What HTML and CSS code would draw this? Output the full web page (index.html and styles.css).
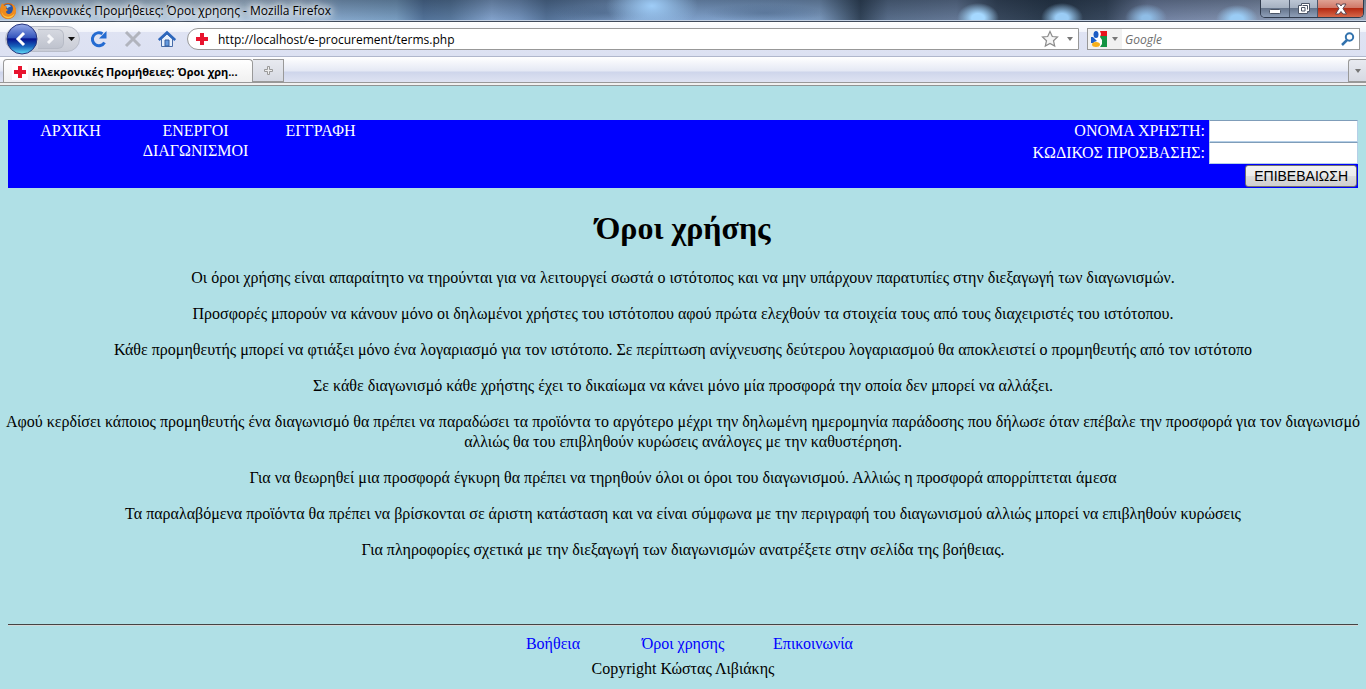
FILE: index.html
```html
<!DOCTYPE html>
<html lang="el">
<head>
<meta charset="utf-8">
<title>Ηλεκρονικές Προμήθειες: Όροι χρησης</title>
<link rel="stylesheet" href="styles.css">
</head>
<body>
<div class="browser">
  <div class="titlebar">
    <svg class="app-icon" width="17" height="18" viewBox="0 0 17 18" aria-hidden="true">
      <circle cx="8" cy="9" r="8" fill="#d9690f"/>
      <circle cx="8" cy="7.500" r="5.500" fill="#2c56a4"/>
      <path d="M5 3.500c2-1.500 5-1 6 1-1.500 0-3 1-3.500 2z" fill="#8fc4f0"/>
      <path d="M1 4l1-3 2 2.500 3 1-1 2 2 1.500-2 1.500c0 3 4 3.500 6 .5 1.500-2.500 1-5 0-8 4 2 5 7 3 10.500C11.500 19 2 17 .5 11 0 8 .2 6 1 4z" fill="#ee8b1c"/>
      <path d="M1.500 9c1 4 4 6.500 8 5.500 2-.5 3.500-1.500 5-3-1 4-5 5.500-8 4.500-3-1-5-4-5-7z" fill="#fbc545"/>
    </svg>
    <span class="window-title">Ηλεκρονικές Προμήθειες: Όροι χρησης - Mozilla Firefox</span>
    <div class="window-buttons">
      <button class="wb wb-min" aria-label="Minimize"><svg width="14" height="12"><rect x="1.500" y="6.500" width="11" height="4" rx="1" fill="#fff" stroke="#4b5566"/></svg></button>
      <button class="wb wb-max" aria-label="Restore"><svg width="14" height="13"><path d="M4.500 1.500h8v8h-2v2h-9v-8h3z" fill="#fff" stroke="#4b5566"/><path d="M4.500 5.500h3.500v3.500h-3.500zM5.500 3.500h5v4" fill="none" stroke="#4b5566"/></svg></button>
      <button class="wb wb-close" aria-label="Close"><svg width="14" height="12" viewBox="0 0 14 12"><path d="M2 1h3.500L7 3l1.500-2H12L9 5.500 12.500 11H9L7 8.500 5 11H1.500L5 5.500z" fill="#fff" stroke="#5a4550"/></svg></button>
    </div>
  </div>

  <div class="toolbar">
    <div class="history">
      <button class="back" aria-label="Back"><svg width="32" height="32" viewBox="0 0 32 32"><defs><linearGradient id="b" x2="0" y2="1"><stop offset="0" stop-color="#98abe8"/><stop offset=".45" stop-color="#3556bd"/><stop offset=".5" stop-color="#06138f"/><stop offset=".75" stop-color="#1765bd"/><stop offset="1" stop-color="#65e2fb"/></linearGradient></defs><circle cx="16" cy="16" r="15" fill="url(#b)" stroke="#28367f"/><path d="M18 10l-6 6 6 6" fill="none" stroke="#fff" stroke-width="3"/></svg></button>
      <button class="forward" aria-label="Forward"><svg width="12" height="14"><path d="M3 3l4 4-4 4" fill="none" stroke="#f6f7fa" stroke-width="3"/></svg></button>
      <button class="history-menu" aria-label="Recent pages"><svg width="8" height="5"><path d="M0 0h7L3.500 4z" fill="#111"/></svg></button>
    </div>
    <button class="tool" aria-label="Reload"><svg width="18" height="18" viewBox="0 0 18 18"><path d="M14.500 12.500A6.500 6.500 0 1 1 12.500 3.800" fill="none" stroke="#246bd1" stroke-width="3"/><path d="M16.500 1v7.500H9z" fill="#246bd1"/></svg></button>
    <button class="tool" aria-label="Stop"><svg width="18" height="18" viewBox="0 0 18 18"><path d="M2 2l14 14M16 2L2 16" stroke="#b1b4bd" stroke-width="3"/></svg></button>
    <button class="tool" aria-label="Home"><svg width="18" height="18" viewBox="0 0 18 18"><path d="M3.500 9v7.500h11V9L9 4z" fill="#e7f0fc" stroke="#476ca9"/><path d="M.8 10L9 2.500 17.200 10" fill="none" stroke="#2d67bd" stroke-width="2.500"/><path d="M7 10h4v6H7z" fill="#6499dc" stroke="#365f9e"/></svg></button>
    <div class="location">
      <span class="favicon-box"><svg width="16" height="16" aria-hidden="true"><path d="M0 0h16v16H0z" fill="#fff"/><path d="M6 2h4v4h4v4h-4v4H6v-4H2V6h4z" fill="#e8142e"/></svg></span>
      <input class="url" type="text" aria-label="Address" value="http://localhost/e-procurement/terms.php">
      <svg width="18" height="18" viewBox="0 0 18 18" aria-hidden="true"><path d="M9 1.500l2.300 5 5.200.5-4 3.700 1.200 5.300L9 13.500 4.300 16l1.200-5.300-4-3.700 5.200-.5z" fill="#f5f5f5" stroke="#8b8b8b" stroke-width="1.200"/></svg>
      <svg width="6" height="4"><path d="M0 0h6L3 4z" fill="#777"/></svg>
    </div>
    <div class="search">
      <span class="engine"><svg width="17" height="17" viewBox="0 0 17 17" aria-hidden="true"><path d="M9 0h7v5H9z" fill="#e8131b"/><path d="M9 5h7v11H9z" fill="#139443"/><path d="M0 6h6v6H0z" fill="#1c60c8"/><path d="M3 0h6l1 3-1 3 2 3v4l-2 3H2l1-5 3-1-4-4z" fill="#fff"/><ellipse cx="5" cy="3.500" rx="2.500" ry="3.500" fill="#1b5bc4"/><ellipse cx="5" cy="13.500" rx="4" ry="2.500" fill="#f5af19"/></svg>
      <svg width="6" height="4"><path d="M0 0h6L3 4z" fill="#777"/></svg></span>
      <input class="query" type="text" aria-label="Search" placeholder="Google">
      <button class="go" aria-label="Go"><svg width="14" height="14" viewBox="0 0 14 14"><circle cx="8.500" cy="5" r="3.700" fill="#fff" stroke="#3272ad" stroke-width="2"/><path d="M6 8l-5 5" stroke="#3272ad" stroke-width="2.500"/></svg></button>
    </div>
  </div>

  <div class="tabs">
    <button class="tab"><svg width="16" height="16" aria-hidden="true"><path d="M0 0h16v16H0z" fill="#fff"/><path d="M6 2h4v4h4v4h-4v4H6v-4H2V6h4z" fill="#e8142e"/></svg>Ηλεκρονικές Προμήθειες: Όροι χρη...</button>
    <button class="new-tab" aria-label="New tab"><svg width="9" height="9"><path d="M3.500.5h2v3h3v2h-3v3h-2v-3h-3v-2h3z" fill="#eee" stroke="#999"/></svg></button>
    <button class="all-tabs" aria-label="List all tabs"><svg width="6" height="4"><path d="M0 0h6L3 4z" fill="#777"/></svg></button>
  </div>
</div>

<div class="page">
  <header class="banner">
    <nav class="menu">
      <a href="#">ΑΡΧΙΚΗ</a>
      <a href="#">ΕΝΕΡΓΟΙ ΔΙΑΓΩΝΙΣΜΟΙ</a>
      <a href="#">ΕΓΓΡΑΦΗ</a>
    </nav>
    <form class="login">
      <div class="field"><label for="user">ΟΝΟΜΑ ΧΡΗΣΤΗ:</label><input id="user" type="text"></div>
      <div class="field"><label for="pass">ΚΩΔΙΚΟΣ ΠΡΟΣΒΑΣΗΣ:</label><input id="pass" type="password"></div>
      <button class="submit" type="button">ΕΠΙΒΕΒΑΙΩΣΗ</button>
    </form>
  </header>

  <main class="terms">
    <h1>Όροι χρήσης</h1>
    <p>Οι όροι χρήσης είναι απαραίτητο να τηρούνται για να λειτουργεί σωστά ο ιστότοπος και να μην υπάρχουν παρατυπίες στην διεξαγωγή των διαγωνισμών.</p>
    <p>Προσφορές μπορούν να κάνουν μόνο οι δηλωμένοι χρήστες του ιστότοπου αφού πρώτα ελεχθούν τα στοιχεία τους από τους διαχειριστές του ιστότοπου.</p>
    <p>Κάθε προμηθευτής μπορεί να φτιάξει μόνο ένα λογαριασμό για τον ιστότοπο. Σε περίπτωση ανίχνευσης δεύτερου λογαριασμού θα αποκλειστεί ο προμηθευτής από τον ιστότοπο</p>
    <p>Σε κάθε διαγωνισμό κάθε χρήστης έχει το δικαίωμα να κάνει μόνο μία προσφορά την οποία δεν μπορεί να αλλάξει.</p>
    <p>Αφού κερδίσει κάποιος προμηθευτής ένα διαγωνισμό θα πρέπει να παραδώσει τα προϊόντα το αργότερο μέχρι την δηλωμένη ημερομηνία παράδοσης που δήλωσε όταν επέβαλε την προσφορά για τον διαγωνισμό αλλιώς θα του επιβληθούν κυρώσεις ανάλογες με την καθυστέρηση.</p>
    <p>Για να θεωρηθεί μια προσφορά έγκυρη θα πρέπει να τηρηθούν όλοι οι όροι του διαγωνισμού. Αλλιώς η προσφορά απορρίπτεται άμεσα</p>
    <p>Τα παραλαβόμενα προϊόντα θα πρέπει να βρίσκονται σε άριστη κατάσταση και να είναι σύμφωνα με την περιγραφή του διαγωνισμού αλλιώς μπορεί να επιβληθούν κυρώσεις</p>
    <p>Για πληροφορίες σχετικά με την διεξαγωγή των διαγωνισμών ανατρέξετε στην σελίδα της βοήθειας.</p>
  </main>

  <footer class="footer">
    <nav class="footer-links">
      <a href="#">Βοήθεια</a>
      <a href="#">Όροι χρησης</a>
      <a href="#">Επικοινωνία</a>
    </nav>
    <div>Copyright Κώστας Λιβιάκης</div>
  </footer>
</div>
</body>
</html>
```
FILE: styles.css
```css
* { box-sizing: border-box; }
body {
  margin: 0;
  background: #b0e0e6;
  font: 16px/20px "Liberation Serif", serif;
  color: #000;
}
button, input { margin: 0; padding: 0; border: 0; background: none; font: inherit; color: inherit; }
svg { flex: none; display: block; }
.browser { font: 12px/16px "Open Sans", sans-serif; }

/* Title bar */
.titlebar {
  display: flex;
  align-items: center;
  height: 22px;
  gap: 4px;
  border-bottom: 1px solid #3f4a5c;
  box-shadow: inset 0 -1px #c3d0e2;
  background:
    radial-gradient(ellipse 21px 15px at 978px 18px, #a5d8ff 30%, #a5d8ff00),
    radial-gradient(ellipse 21px 15px at 1062px 18px, #9accf5 30%, #9accf500),
    radial-gradient(ellipse 21px 14px at 1146px 18px, #8fbde6 20%, #8fbde600),
    radial-gradient(ellipse 21px 14px at 1237px 19px, #9accf5 30%, #9accf500),
    radial-gradient(ellipse 46px 26px at 652px 6px, #9fcdf8, #9fcdf800),
    radial-gradient(ellipse 48px 9px at 603px 13px, #3f597a66, #3f597a00),
    radial-gradient(ellipse 60px 9px at 765px 13px, #3f597a66, #3f597a00),
    linear-gradient(#0a142055, #0a142000),
    linear-gradient(90deg, #a9c4dc, #b9cee2 14%, #aec6de 22%, #86a8cc 25%, #7ba0c4 29%, #54749b 31%, #5a7a9f 33%, #85a5cf 36%, #7595bf 38%, #56749a 40%, #7c9cc6 46%, #82a4cf 50%, #7c9cc4 58%, #7c9abf 60%, #33455a 63%, #5a6f8c 65%, #667a98 70%, #39495e 73%, #2a3a4c 77%, #39495e 81%, #7484a4 84%, #8090ae 90%, #a0aec2);
}
.window-title { text-shadow: 0 0 6px #fff, 0 0 8px #fff, 0 0 10px #fff; }
.window-buttons { display: flex; align-self: flex-start; margin: 0 2px 0 auto; height: 18px; border: 1px solid #2f3a4c; border-top: 0; border-radius: 0 0 5px 5px; overflow: hidden; }
.wb { display: flex; align-items: center; justify-content: center; width: 28px; border-left: 1px solid #4c586c; background: linear-gradient(#bcc6d4, #a3afc0 50%, #66758c 50%, #8e9fb8); }
.wb-min { border-left: 0; }
.wb-close { width: 46px; background: linear-gradient(#dfa193, #cf7464 50%, #b52a13 50%, #d6684a); }

/* Navigation toolbar */
.toolbar { display: flex; align-items: center; height: 35px; padding: 0 6px 0 5px; background: linear-gradient(#fff, #f2f4fb 28%, #dfe3f3 30%, #dce1f2); border-bottom: 1px solid #b0b7cc; }
.history { display: flex; align-items: center; height: 26px; margin-right: 10px; border: 1px solid #b9bdc9; border-radius: 13px; background: linear-gradient(#e0e2e8, #c9ccd6); }
.back { width: 32px; }
.forward { display: flex; align-items: center; justify-content: center; width: 26px; height: 20px; border: 1px solid #b7bbc6; border-left: 0; border-radius: 0 6px 6px 0; background: linear-gradient(#d5d8e0, #bfc3ce); }
.history-menu { display: flex; justify-content: center; width: 15px; }
.tool { margin-right: 16px; }
.location, .search { display: flex; align-items: center; height: 22px; border: 1px solid #989898; background: #fff; }
.tool + .location { margin-left: -5px; }
.location { flex: 1; gap: 8px; padding-right: 5px; border-radius: 11px 0 0 11px; margin-right: 8px; }
.favicon-box { padding-left: 6px; }
.url { flex: 1; min-width: 0; padding-top: 2px; }
.search { width: 273px; }
.engine { display: flex; align-items: center; gap: 4px; height: 20px; padding: 0 4px 0 3px; background: #f1f1f1; }
.query { flex: 1; min-width: 0; padding: 2px 0 0 3px; }
.query::placeholder { color: #6d6d6d; font-style: italic; opacity: 1; }
.go { padding-right: 4px; }

/* Tab strip */
.tabs { display: flex; align-items: flex-end; height: 29px; padding: 0 0 3px 3px; border-bottom: 1px solid #8f9494; background: linear-gradient(#f0f0f0, #f0f0f0) bottom / 100% 2px no-repeat, linear-gradient(#989898, #989898) 0 25px / 100% 1px no-repeat, linear-gradient(#fff, #e4e8f4 14px, #ced5eb 15px, #e0e4f3 26px); }
.tab { display: flex; align-items: center; gap: 4px; width: 250px; height: 23px; padding: 2px 8px 0; border: 1px solid #999; border-bottom: 0; border-radius: 4px 4px 0 0; background: linear-gradient(#fff, #f0f0f0); font-size: 11px; font-weight: bold; white-space: nowrap; }
.new-tab, .all-tabs { display: flex; align-items: center; justify-content: center; width: 31px; height: 23px; border: 1px solid #999; border-left: 0; background: linear-gradient(#e8eaf0, #d6d9e2); }
.all-tabs { width: 18px; margin-left: auto; border-left: 1px solid #999; border-right: 0; border-radius: 3px 0 0 0; }

/* Site */
.page { padding: 34px 8px 10px; }
.banner { display: flex; justify-content: space-between; background: #00f; color: #fff; }
.menu { display: flex; padding-top: 1px; }
.menu a { width: 125px; text-align: center; color: #fff; text-decoration: none; }
.login { display: flex; flex-direction: column; align-items: flex-end; }
.field { display: flex; gap: 4px; height: 22px; line-height: 22px; }
.field input { width: 149px; height: 22px; padding: 1px 3px; border: 1px solid #b5cfe7; border-top-color: #7f9db9; background: #fff; color: #000; }
.submit { height: 22px; margin: 1px; padding: 0 8px; border: 1px solid #707070; border-radius: 3px; background: linear-gradient(#f2f2f2, #ebebeb 50%, #ddd 50%, #cfcfcf); font: 14px/20px "Liberation Sans", sans-serif; color: #000; }
.terms { margin: 0 -8px; text-align: center; }
h1 { margin: 22px 0 21px; font-size: 32px; line-height: 37px; }
p { margin: 0 0 16px; }
.footer { margin-top: 64px; padding-top: 9px; border-top: 1px solid #444; box-shadow: inset 0 1px #d5d8d8; text-align: center; }
.footer-links { display: flex; justify-content: center; margin-bottom: 5px; }
.footer-links a { width: 130px; color: #00f; text-decoration: none; }
```
